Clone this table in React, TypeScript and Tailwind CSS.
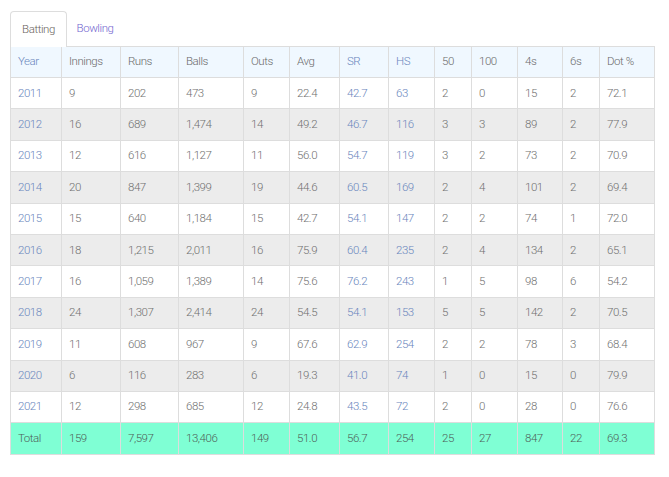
import React from "react";

type Row = string[];

const headers = ["Year", "Innings", "Runs", "Balls", "Outs", "Avg", "SR", "HS", "50", "100", "4s", "6s", "Dot %"];
const widths = ["w-[51px]", "w-[59px]", "w-[58px]", "w-[65px]", "w-[46px]", "w-[50px]", "w-[49px]", "w-[46px]", "w-[37px]", "w-[46px]", "w-[45px]", "w-[37px]", "w-[55px]"];

const rows: Row[] = [
  ["2011", "9", "202", "473", "9", "22.4", "42.7", "63", "2", "0", "15", "2", "72.1"],
  ["2012", "16", "689", "1,474", "14", "49.2", "46.7", "116", "3", "3", "89", "2", "77.9"],
  ["2013", "12", "616", "1,127", "11", "56.0", "54.7", "119", "3", "2", "73", "2", "70.9"],
  ["2014", "20", "847", "1,399", "19", "44.6", "60.5", "169", "2", "4", "101", "2", "69.4"],
  ["2015", "15", "640", "1,184", "15", "42.7", "54.1", "147", "2", "2", "74", "1", "72.0"],
  ["2016", "18", "1,215", "2,011", "16", "75.9", "60.4", "235", "2", "4", "134", "2", "65.1"],
  ["2017", "16", "1,059", "1,389", "14", "75.6", "76.2", "243", "1", "5", "98", "6", "54.2"],
  ["2018", "24", "1,307", "2,414", "24", "54.5", "54.1", "153", "5", "5", "142", "2", "70.5"],
  ["2019", "11", "608", "967", "9", "67.6", "62.9", "254", "2", "2", "78", "3", "68.4"],
  ["2020", "6", "116", "283", "6", "19.3", "41.0", "74", "1", "0", "15", "0", "79.9"],
  ["2021", "12", "298", "685", "12", "24.8", "43.5", "72", "2", "0", "28", "0", "76.6"],
];
const total: Row = ["Total", "159", "7,597", "13,406", "149", "51.0", "56.7", "254", "25", "27", "847", "22", "69.3"];

const blueCols = new Set([0, 6, 7]);

export default function App() {
  return (
    <div
      className="w-[669px] h-[477px] bg-white pt-[11px] px-[10px] text-[11.5px] font-light tracking-[-0.45px]"
      style={{ fontFamily: 'Roboto, "Liberation Sans", sans-serif' }}
    >
      <div className="flex">
        <div className="w-[57px] h-[36px] flex items-center justify-center border border-b-0 border-[#dddddd] rounded-t-[4px] bg-white text-[#6b6560] -mb-px relative z-10">
          Batting
        </div>
        <div className="w-[56px] h-[35px] flex items-center justify-center text-[#7468d0]">Bowling</div>
      </div>
      <table className="table-fixed border-collapse w-[644px]">
        <thead>
          <tr className="bg-[#f0f8ff]">
            {headers.map((h, i) => (
              <th
                key={h}
                className={`${widths[i]} h-[31px] border border-[#dddddd] pl-[7px] text-left font-light ${blueCols.has(i) ? "text-[#6a86bd]" : "text-[#6b6b6b]"}`}
              >
                {h}
              </th>
            ))}
          </tr>
        </thead>
        <tbody>
          {rows.map((r, ri) => (
            <tr key={ri} className={ri % 2 === 1 ? "bg-[#ececec]" : "bg-white"}>
              {r.map((c, i) => (
                <td
                  key={i}
                  className={`h-[31.4px] border border-[#dddddd] pl-[7px] ${blueCols.has(i) ? "text-[#6a86bd]" : "text-[#707070]"}`}
                >
                  {c}
                </td>
              ))}
            </tr>
          ))}
          <tr className="bg-[#7fffd4]">
            {total.map((c, i) => (
              <td key={i} className="h-[31.4px] border border-[#dddddd] pl-[7px] text-[#4f5f5a]">
                {c}
              </td>
            ))}
          </tr>
        </tbody>
      </table>
    </div>
  );
}
